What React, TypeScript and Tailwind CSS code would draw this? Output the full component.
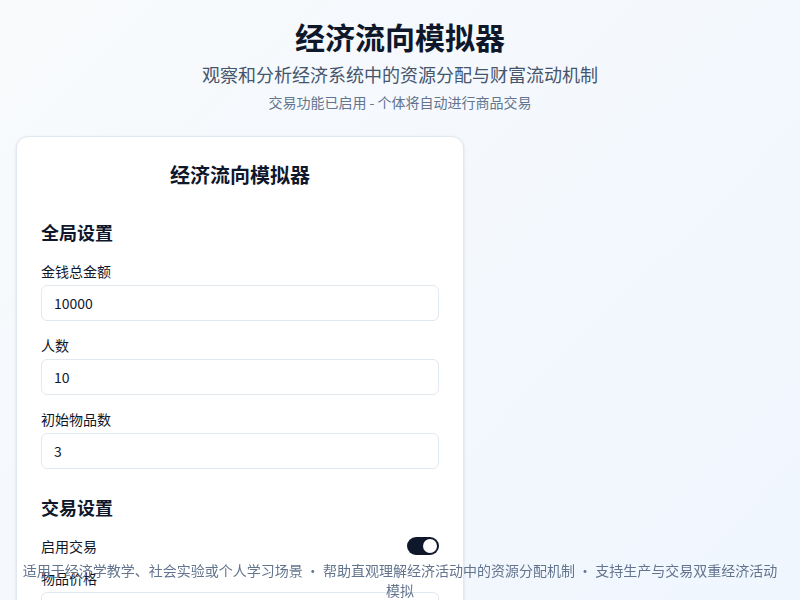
import React from 'react';

const Field: React.FC<{ label: string; value: string }> = ({ label, value }) => (
  <div>
    <label className="block text-sm leading-5 text-slate-900 mb-1">{label}</label>
    <input
      readOnly
      value={value}
      className="w-full h-9 rounded-md border border-slate-200 bg-white px-3 text-sm text-slate-900 outline-none"
    />
  </div>
);

export default function App() {
  return (
    <div
      className="min-h-screen bg-gradient-to-br from-slate-50 to-blue-50 px-4 pt-[18px] pb-16"
      style={{ fontFamily: '"Noto Sans CJK SC", "Noto Sans", sans-serif' }}
    >
      <header className="text-center">
        <h1 className="text-3xl leading-9 font-bold text-slate-900">经济流向模拟器</h1>
        <p className="mt-1.5 text-lg leading-7 text-slate-600">观察和分析经济系统中的资源分配与财富流动机制</p>
        <p className="mt-1 text-sm leading-5 text-slate-500">交易功能已启用 - 个体将自动进行商品交易</p>
      </header>

      <div className="mt-6 flex">
        <div className="w-[448px] rounded-xl border border-slate-200 bg-white px-6 pt-6 pb-6 shadow-sm">
          <h2 className="text-xl leading-7 font-bold text-slate-900 text-center mb-[29px]">经济流向模拟器</h2>

          <section>
            <h3 className="text-lg leading-7 font-bold text-slate-900 mb-[15px]">全局设置</h3>
            <div className="space-y-3.5">
              <Field label="金钱总金额" value="10000" />
              <Field label="人数" value="10" />
              <Field label="初始物品数" value="3" />
            </div>
          </section>

          <section className="mt-6">
            <h3 className="text-lg leading-7 font-bold text-slate-900 mb-[15px]">交易设置</h3>
            <div className="space-y-3">
              <div className="flex items-center justify-between">
                <span className="text-sm leading-5 text-slate-900">启用交易</span>
                <button className="relative w-8 h-[18px] rounded-full bg-slate-900">
                  <span className="absolute right-[2px] top-[2px] w-[14px] h-[14px] rounded-full bg-white" />
                </button>
              </div>
              <Field label="物品价格" value="10" />
              <Field label="交易概率" value="0.5" />
            </div>
          </section>
        </div>
      </div>

      <footer className="fixed bottom-0 left-0 right-0 px-4 text-center text-sm leading-5 text-slate-500">
        适用于经济学教学、社会实验或个人学习场景 • 帮助直观理解经济活动中的资源分配机制 • 支持生产与交易双重经济活动模拟
      </footer>
    </div>
  );
}
